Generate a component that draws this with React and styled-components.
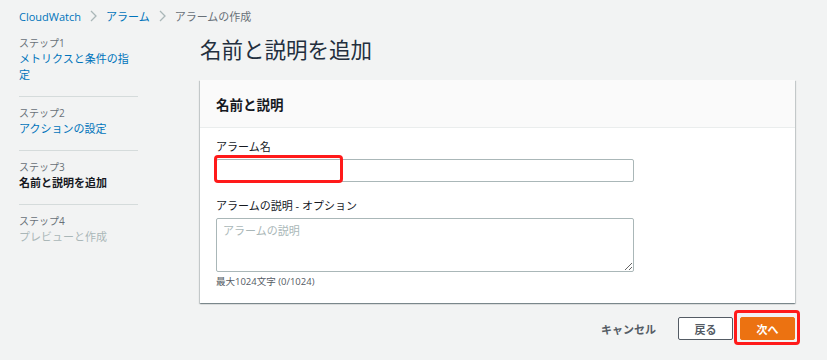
import React from 'react'
import styled, { createGlobalStyle } from 'styled-components'

const Global = createGlobalStyle`
  body {
    margin: 0;
    background: #f2f3f3;
    font-family: "Open Sans", "Noto Sans CJK JP", sans-serif;
    color: #16191f;
  }
`

const Page = styled.div`
  width: 827px;
  height: 360px;
  overflow: hidden;
  box-sizing: border-box;
  padding: 7px 0 0 19px;
`

const Crumbs = styled.div`
  display: flex;
  align-items: center;
  gap: 9px;
  font-size: 11px;
  height: 18px;
`

const Crumb = styled.span`
  color: ${p => (p.current ? '#687078' : '#0073bb')};
`

const Chevron = () => (
  <svg width="7" height="12" viewBox="0 0 7 12">
    <polyline points="1,1 6,6 1,11" fill="none" stroke="#aab7b8" strokeWidth="1.3" />
  </svg>
)

const Layout = styled.div`
  display: flex;
  margin-top: 10px;
`

const Side = styled.nav`
  width: 119px;
  flex: none;
`

const Step = styled.div`
  padding: 8px 0 13px;
  border-bottom: ${p => (p.last ? 'none' : '1px solid #d5dbdb')};
  &:first-child {
    padding-top: 0;
  }
`

const StepNo = styled.div`
  font-size: 10px;
  color: #687078;
  line-height: 16px;
`

const StepName = styled.div`
  font-size: 11px;
  line-height: 16px;
  color: ${p => (p.state === 'done' ? '#0073bb' : p.state === 'now' ? '#16191f' : '#aab7b8')};
  font-weight: ${p => (p.state === 'now' ? 700 : 400)};
`

const Main = styled.main`
  margin-left: 62px;
  padding-top: 1px;
  width: 595px;
`

const Title = styled.h1`
  margin: 0 0 16px;
  font-size: 21.5px;
  font-weight: 400;
  line-height: 28px;
  color: #232f3e;
`

const Panel = styled.section`
  background: #fff;
  box-shadow: 0 1px 1px 0 rgba(0, 28, 36, 0.3), 1px 1px 1px 0 rgba(0, 28, 36, 0.15), -1px 1px 1px 0 rgba(0, 28, 36, 0.15);
`

const PanelHead = styled.div`
  height: 47px;
  display: flex;
  align-items: center;
  padding-left: 16px;
  background: #fafafa;
  border-bottom: 1px solid #eaeded;
  font-size: 13.5px;
  font-weight: 700;
`

const PanelBody = styled.div`
  padding: 11px 16px 15px;
`

const Label = styled.div`
  font-size: 11px;
  line-height: 16px;
  margin-bottom: 4px;
`

const Field = styled.div`
  position: relative;
  width: 418px;
  margin-bottom: ${p => p.gap || 0}px;
`

const Input = styled.input`
  display: block;
  box-sizing: border-box;
  width: 100%;
  height: 23px;
  border: 1px solid #aab7b8;
  border-radius: 2px;
  background: #fff;
`

const Area = styled.textarea`
  display: block;
  box-sizing: border-box;
  width: 100%;
  height: 54px;
  border: 1px solid #aab7b8;
  border-radius: 2px;
  padding: 3px 6px;
  font-family: inherit;
  font-size: 11px;
  resize: vertical;
  &::placeholder {
    color: #aab7b8;
  }
`

const Hint = styled.div`
  font-size: 9.5px;
  line-height: 13px;
  color: #545b64;
  margin-top: 3px;
`

const Mark = styled.div`
  position: absolute;
  border: 3px solid #ff1a1a;
  border-radius: 4px;
  pointer-events: none;
  left: ${p => p.l}px;
  top: ${p => p.t}px;
  width: ${p => p.w}px;
  height: ${p => p.h}px;
  box-sizing: border-box;
`

const Footer = styled.div`
  display: flex;
  justify-content: flex-end;
  align-items: center;
  margin-top: 14px;
  gap: 7px;
`

const TextBtn = styled.span`
  font-size: 11px;
  font-weight: 700;
  color: #545b64;
  margin-right: 15px;
`

const Btn = styled.button`
  position: relative;
  width: ${p => p.w}px;
  height: 23px;
  font-family: inherit;
  font-size: 11px;
  font-weight: 700;
  border-radius: 2px;
  border: 1px solid ${p => (p.primary ? '#ec7211' : '#545b64')};
  background: ${p => (p.primary ? '#ec7211' : '#fff')};
  color: ${p => (p.primary ? '#fff' : '#545b64')};
  padding: 0;
`

export default function App() {
  return (
    <Page>
      <Global />
      <Crumbs>
        <Crumb>CloudWatch</Crumb>
        <Chevron />
        <Crumb>アラーム</Crumb>
        <Chevron />
        <Crumb current>アラームの作成</Crumb>
      </Crumbs>
      <Layout>
        <Side>
          <Step>
            <StepNo>ステップ1</StepNo>
            <StepName state="done">メトリクスと条件の指定</StepName>
          </Step>
          <Step>
            <StepNo>ステップ2</StepNo>
            <StepName state="done">アクションの設定</StepName>
          </Step>
          <Step>
            <StepNo>ステップ3</StepNo>
            <StepName state="now">名前と説明を追加</StepName>
          </Step>
          <Step last>
            <StepNo>ステップ4</StepNo>
            <StepName state="todo">プレビューと作成</StepName>
          </Step>
        </Side>
        <Main>
          <Title>名前と説明を追加</Title>
          <Panel>
            <PanelHead>名前と説明</PanelHead>
            <PanelBody>
              <Label>アラーム名</Label>
              <Field gap={16}>
                <Input />
                <Mark l={-2} t={-4} w={129} h={28} />
              </Field>
              <Label>アラームの説明 - オプション</Label>
              <Field>
                <Area placeholder="アラームの説明" />
              </Field>
              <Hint>最大1024文字 (0/1024)</Hint>
            </PanelBody>
          </Panel>
          <Footer>
            <TextBtn>キャンセル</TextBtn>
            <Btn w={55}>戻る</Btn>
            <Btn primary w={55}>
              次へ
              <Mark l={-7} t={-8} w={66} h={35} />
            </Btn>
          </Footer>
        </Main>
      </Layout>
    </Page>
  )
}
